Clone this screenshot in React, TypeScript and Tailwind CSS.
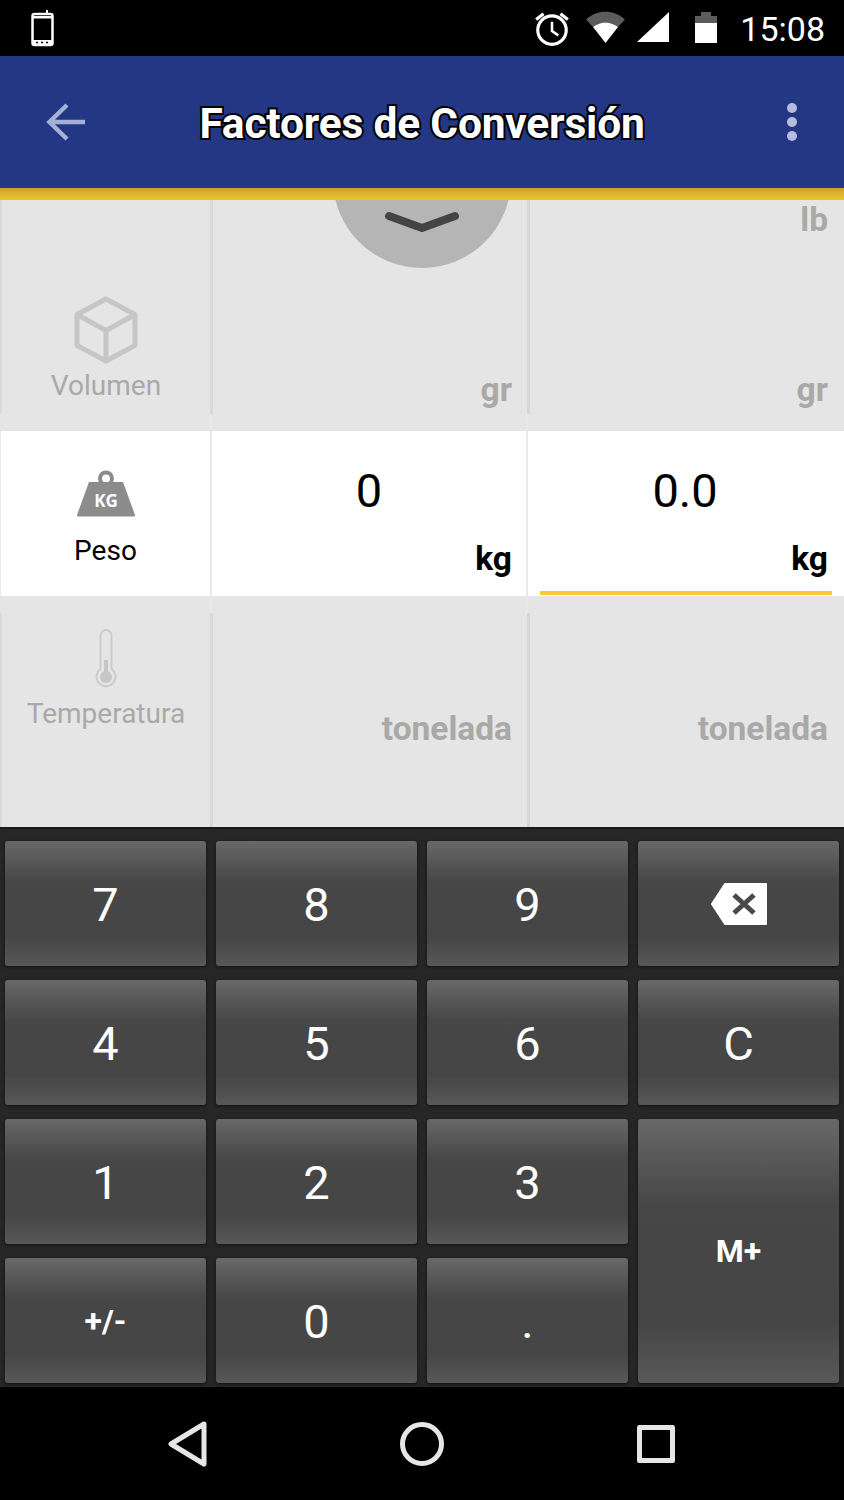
import { ReactNode } from 'react';

const font = "font-['Roboto',sans-serif]";

function PhoneIcon() {
  return (
    <svg width="24" height="38" viewBox="0 0 24 38" className="ml-[30px]">
      <path d="M17 1v4" stroke="#fff" strokeWidth="2" />
      <rect x="2.5" y="5" width="20" height="31" rx="2" fill="none" stroke="#fff" strokeWidth="2.5" />
      <rect x="2" y="7" width="20" height="2.5" fill="#fff" />
      <rect x="2" y="31" width="20" height="5" fill="#fff" />
      <path d="M6 33.5h2M11 33.5h2M16 33.5h2" stroke="#000" strokeWidth="1.6" />
    </svg>
  );
}

function StatusIcons() {
  return (
    <div className="flex items-center">
      <svg width="38" height="38" viewBox="0 0 36 36">
        <circle cx="18" cy="20" r="13.5" fill="none" stroke="#fff" strokeWidth="3" />
        <path d="M18 12v9l6 4" fill="none" stroke="#fff" strokeWidth="2.4" />
        <path d="M3 10l7-5.5M33 10l-7-5.5" stroke="#fff" strokeWidth="3" />
      </svg>
      <svg width="40" height="36" viewBox="0 0 40 36" className="ml-[15px]">
        <path d="M0 9.5C11-1 28-1 39 9.5L32 17C24 11 15 11 7 17Z" fill="#5c5c5c" />
        <path d="M7 17C15 11 24 11 32 17L19.5 33Z" fill="#fff" />
      </svg>
      <svg width="34" height="36" viewBox="0 0 34 36" className="ml-[10px]">
        <path d="M33 2v30H1Z" fill="#fff" />
      </svg>
      <svg width="24" height="36" viewBox="0 0 24 36" className="ml-[24px]">
        <path d="M7 2h10v4h6v7H1V6h6Z" fill="#5c5c5c" />
        <rect x="1" y="13" width="22" height="20" fill="#fff" />
      </svg>
      <span className={`${font} ml-[22px] mr-[19px] mt-[2px] text-[34px] leading-none text-white`}>15:08</span>
    </div>
  );
}

function CubeIcon() {
  return (
    <svg width="64" height="68" viewBox="0 0 64 68" fill="none" stroke="#c6c6c6" strokeWidth="5" strokeLinejoin="round">
      <path d="M32 3 61 18.500V49.500L32 65 3 49.500V18.500Z" />
      <path d="M3 18.500 32 34.500 61 18.500M32 34.500V65" />
    </svg>
  );
}

function WeightIcon() {
  return (
    <svg width="58" height="48" viewBox="0 0 58 48">
      <circle cx="29" cy="8.500" r="6" fill="none" stroke="#8c8c8c" strokeWidth="4" />
      <path d="M12 12h34l12 33a1.500 1.500 0 0 1-1.500 1.500H1.500A1.500 1.500 0 0 1 0 45Z" fill="#8c8c8c" />
      <text x="29" y="37" textAnchor="middle" fill="#fff" fontSize="17" fontWeight="700" fontFamily="'Open Sans',sans-serif">KG</text>
    </svg>
  );
}

function ThermometerIcon() {
  return (
    <svg width="22" height="60" viewBox="0 0 22 60" fill="none">
      <path d="M5.500 40V6.500a5.500 5.500 0 0 1 11 0V40a9.500 9.500 0 1 1-11 0Z" stroke="#cbcbcb" strokeWidth="1.800" />
      <rect x="9" y="31" width="4" height="14" fill="#c6c6c6" />
      <circle cx="11" cy="48" r="6" fill="#c6c6c6" />
    </svg>
  );
}

function BackspaceIcon() {
  return (
    <svg width="58" height="44" viewBox="0 0 58 44">
      <path d="M15 2h41v40H15L2 22Z" fill="#fff" stroke="#fff" strokeWidth="2" strokeLinejoin="round" />
      <path d="M24 13 44 31M44 13 24 31" stroke="#4a4a4a" strokeWidth="5" />
    </svg>
  );
}

function Unit({ children, muted, inset }: { children: ReactNode; muted?: boolean; inset: string }) {
  return (
    <div className={`text-right text-[33.500px] font-bold leading-[38px] ${inset} ${muted ? 'text-[#a9a9a9]' : 'text-black'}`}>
      {children}
    </div>
  );
}

// gray rows: the divider stops short of the white row
function MutedRow({ flip, icon, label, iconTop, labelGap, second, third }: {
  flip?: boolean;
  icon: ReactNode;
  label: string;
  iconTop: string;
  labelGap: string;
  second: ReactNode;
  third: ReactNode;
}) {
  const strip = (
    <div className="grid h-[17px] grid-cols-[212px_316px_316px]">
      <div className="border-r-2 border-[#e9e9e9]" />
      <div className="border-r-2 border-[#e9e9e9]" />
      <div />
    </div>
  );
  return (
    <div className="flex h-[231px] flex-col bg-[#e5e5e5]">
      {flip && strip}
      <div className="grid h-[214px] grid-cols-[213px_317px_314px]">
        <div className={`flex flex-col items-center border-r-[3px] border-l-2 border-l-[#dadada] border-r-[#d9d9d9] ${iconTop}`}>
          {icon}
          <div className={`text-[28px] leading-[34px] text-[#a9a9a9] ${labelGap}`}>{label}</div>
        </div>
        <div className="border-r-[3px] border-[#d7d7d7]">{second}</div>
        <div>{third}</div>
      </div>
      {!flip && strip}
    </div>
  );
}

function Key({ children, tall }: { children: ReactNode; tall?: boolean }) {
  return (
    <div
      className={`flex items-center justify-center rounded-[3px] bg-[linear-gradient(#686868,#474747_32%,#454545_76%,#585858)] text-white shadow-[0_1px_3px_#111] ${tall ? 'row-span-2' : ''}`}
    >
      {children}
    </div>
  );
}

const digit = 'pt-[2px] text-[47px] leading-none';
const small = 'text-[32px] font-bold leading-none';

export default function App() {
  return (
    <div className={`${font} flex h-[1500px] w-[844px] flex-col overflow-hidden bg-black`}>
      <div className="flex h-[56px] items-center justify-between bg-black">
        <PhoneIcon />
        <StatusIcons />
      </div>

      <div className="relative z-10 flex h-[132px] items-center justify-between bg-[#233785]">
        <svg width="40" height="38" viewBox="0 0 40 38" className="ml-[46px]" fill="none" stroke="#a6afd6" strokeWidth="4.500">
          <path d="M39 19H4M21 2 3.500 19 21 36" />
        </svg>
        <div className="absolute inset-x-0 top-[43px] text-center text-[42.500px] font-bold leading-[50px] tracking-[-0.2px] text-white [paint-order:stroke_fill] [-webkit-text-stroke:4px_#000]">
          Factores de Conversión
        </div>
        <div className="mr-[47px] flex flex-col gap-[4px]">
          <div className="size-[10px] rounded-full bg-[#b5bcdc]" />
          <div className="size-[10px] rounded-full bg-[#b5bcdc]" />
          <div className="size-[10px] rounded-full bg-[#b5bcdc]" />
        </div>
      </div>
      <div className="relative z-10 h-[12px] bg-[linear-gradient(#c9a22e,#f2c22f)]" />

      <div className="relative flex flex-col overflow-hidden">
        {/* pull-down handle sits over the first row */}
        <div className="absolute left-[333px] top-[-110px] flex h-[178px] w-[178px] items-end justify-center rounded-full bg-[#b5b5b5] pb-[34px]">
          <svg width="76" height="24" viewBox="0 0 76 24" fill="none" stroke="#444" strokeWidth="8" strokeLinecap="round" strokeLinejoin="round">
            <path d="M5 6 38 18 71 6" />
          </svg>
        </div>

        <MutedRow
          icon={<CubeIcon />}
          label="Volumen"
          iconTop="pt-[96px]"
          labelGap="mt-[5px]"
          second={<div className="pt-[171px]"><Unit muted inset="pr-[15px]">gr</Unit></div>}
          third={
            <div className="flex h-full flex-col justify-between pb-[5px] pt-[1px]">
              <Unit muted inset="pr-[16px]">lb</Unit>
              <Unit muted inset="pr-[16px]">gr</Unit>
            </div>
          }
        />

        <div className="grid h-[165px] grid-cols-[212px_316px_316px] bg-white">
          <div className="flex flex-col items-center border-r-2 border-l border-[#e9e9e9] pt-[39px] text-[28px] leading-[34px] text-black">
            <WeightIcon />
            <div className="mt-[16px]">Peso</div>
          </div>
          <div className="border-r-2 border-[#e9e9e9] pt-[33px]">
            <div className="text-center text-[47px] leading-[54px] text-black">0</div>
            <div className="mt-[22px]"><Unit inset="pr-[14px]">kg</Unit></div>
          </div>
          <div className="flex flex-col pt-[33px]">
            <div className="pr-[2px] text-center text-[47px] leading-[54px] text-black">0.0</div>
            <div className="mt-[22px]"><Unit inset="pr-[16px]">kg</Unit></div>
            <div className="ml-[12px] mr-[12px] mt-[13px] h-[4px] bg-[#fcc934]" />
          </div>
        </div>

        <MutedRow
          flip
          icon={<ThermometerIcon />}
          label="Temperatura"
          iconTop="pt-[16px]"
          labelGap="mt-[8px]"
          second={<div className="pt-[97px]"><Unit muted inset="pr-[15px]">tonelada</Unit></div>}
          third={<div className="pt-[97px]"><Unit muted inset="pr-[16px]">tonelada</Unit></div>}
        />
      </div>

      <div className="grid h-[560px] grid-cols-4 grid-rows-4 gap-x-[10px] gap-y-[14px] border-t-2 border-[#1a1a1a] bg-[#262626] pb-[4px] pl-[5px] pr-[5px] pt-[12px]">
        <Key><span className={digit}>7</span></Key>
        <Key><span className={digit}>8</span></Key>
        <Key><span className={digit}>9</span></Key>
        <Key><BackspaceIcon /></Key>
        <Key><span className={digit}>4</span></Key>
        <Key><span className={digit}>5</span></Key>
        <Key><span className={digit}>6</span></Key>
        <Key><span className={digit}>C</span></Key>
        <Key><span className={digit}>1</span></Key>
        <Key><span className={digit}>2</span></Key>
        <Key><span className={digit}>3</span></Key>
        <Key tall><span className={small}>M+</span></Key>
        <Key><span className={small}>+/-</span></Key>
        <Key><span className={digit}>0</span></Key>
        <Key><span className={digit}>.</span></Key>
      </div>

      <div className="flex flex-1 items-center justify-center bg-black pr-[2px]">
        <svg width="40" height="46" viewBox="0 0 40 46" fill="none" stroke="#e6e6e6" strokeWidth="5" strokeLinejoin="round">
          <path d="M36 3 3 23 36 43Z" />
        </svg>
        <svg width="46" height="46" viewBox="0 0 46 46" fill="none" stroke="#e6e6e6" strokeWidth="5" className="ml-[191px]">
          <circle cx="23" cy="23" r="19.500" />
        </svg>
        <svg width="38" height="38" viewBox="0 0 38 38" fill="none" stroke="#e6e6e6" strokeWidth="5" strokeLinejoin="round" className="ml-[192px]">
          <rect x="2.500" y="2.500" width="33" height="33" />
        </svg>
      </div>
    </div>
  );
}
